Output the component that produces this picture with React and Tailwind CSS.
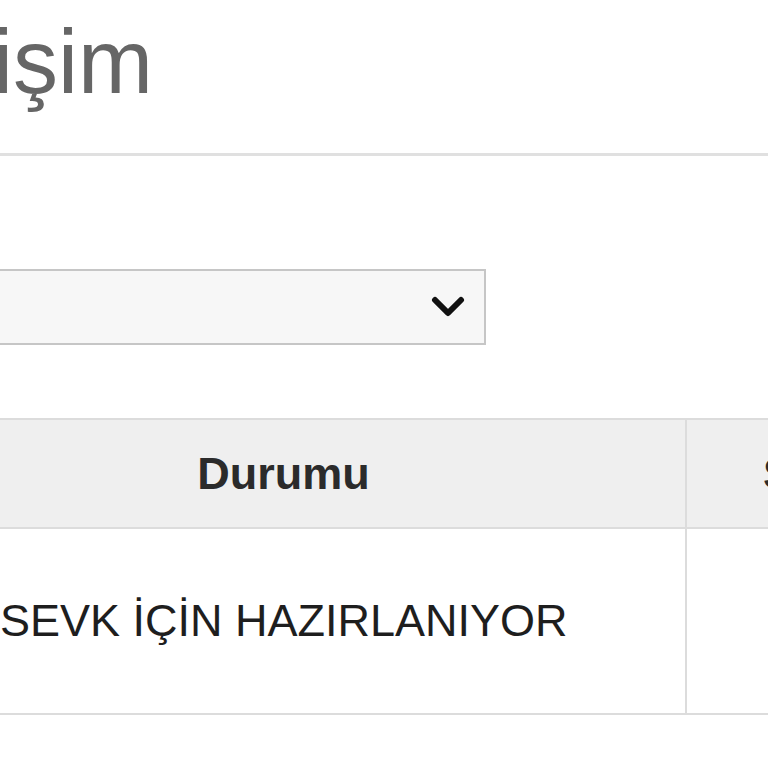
export default function App() {
  return (
    <div className="w-[768px] h-[768px] overflow-hidden bg-white font-['Liberation_Sans',Arial,sans-serif]">
      <div className="ml-[-118px] w-[1000px]">
        <h1 className="pl-[111px] pt-[17px] text-[90px] leading-[90px] font-normal text-[#666666] whitespace-nowrap">
          işim
        </h1>
        <div className="mt-[46px] border-t-[3px] border-[#e0e0e0]" />
        <div className="mt-[113px] h-[76px] w-[604px] border-2 border-[#c6c6c6] bg-[#f7f7f7] flex items-center justify-end pr-[19px]">
          <svg width="34" height="22" viewBox="0 0 34 22" fill="none">
            <polyline points="4,4 17,17 30,4" stroke="#111" strokeWidth="6" strokeLinecap="round" strokeLinejoin="round" />
          </svg>
        </div>
        <div className="mt-[73px]">
          <div className="flex border-t-2 border-b-2 border-[#dcdcdc] bg-[#efefef] h-[111px]">
            <div className="w-[805px] shrink-0 border-r-2 border-[#dcdcdc] flex items-center justify-center text-[45px] font-bold text-[#2b2b2b]">
              Durumu
            </div>
            <div className="flex-1 flex items-center pl-[76px] text-[45px] font-bold text-[#2b2b2b] whitespace-nowrap">
              Sevk Tarihi
            </div>
          </div>
          <div className="flex border-b-2 border-[#dcdcdc] h-[186px]">
            <div className="w-[805px] shrink-0 border-r-2 border-[#dcdcdc] flex items-center pl-[118px] text-[45px] text-[#1e1e1e] whitespace-nowrap">
              SEVK İÇİN HAZIRLANIYOR
            </div>
            <div className="flex-1" />
          </div>
        </div>
      </div>
    </div>
  );
}
